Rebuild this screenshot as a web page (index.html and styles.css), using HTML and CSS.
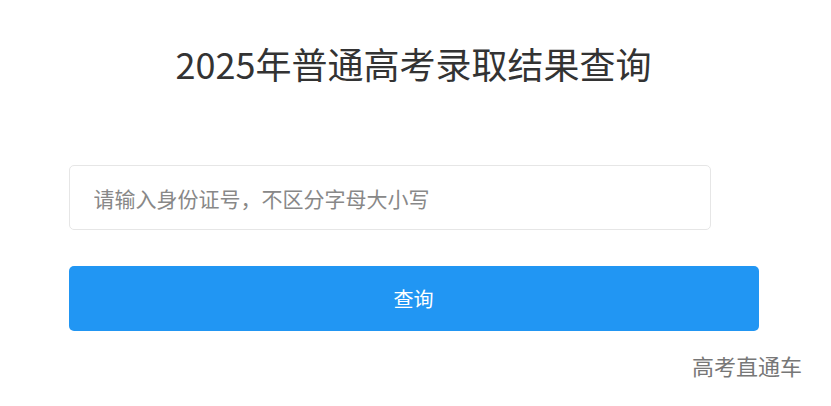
FILE: index.html
```html
<!DOCTYPE html>
<html lang="zh-CN">
<head>
    <meta charset="UTF-8">
    <meta name="viewport" content="width=device-width, initial-scale=1.0">
    <title>2025年普通高考录取结果查询</title>
    <link rel="stylesheet" href="styles.css">
</head>
<body>
    <div class="container">
        <h1>2025年普通高考录取结果查询</h1>
        <form class="query-form">
            <input type="text" class="id-input" placeholder="请输入身份证号，不区分字母大小写">
            <button type="submit" class="query-button">查询</button>
        </form>
    </div>
    <footer>
        <a href="#" class="footer-link">高考直通车</a>
    </footer>
</body>
</html>
```

FILE: styles.css
```css
body {
    font-family: "Noto Sans CJK SC", "Noto Sans", sans-serif;
    margin: 0;
    padding: 0 4px 0 0;
    background: #fff;
    color: #333;
}
.container {
    width: 690px;
    margin: 0 auto;
}
h1 {
    font-size: 36px;
    font-weight: 400;
    line-height: 54px;
    text-align: center;
    margin: 36px 0 0;
    color: #333;
}
.query-form {
    display: flex;
    flex-direction: column;
    margin-top: 75px;
}
.id-input {
    box-sizing: border-box;
    width: 642px;
    height: 65px;
    padding: 0 24px;
    border: 1px solid #e6e6e6;
    border-radius: 5px;
    font-family: inherit;
    font-size: 21px;
    color: #333;
    outline: none;
}
.id-input::placeholder {
    color: #888;
}
.query-button {
    margin-top: 36px;
    width: 690px;
    height: 65px;
    background: #2196f3;
    color: #fff;
    border: none;
    border-radius: 5px;
    font-family: inherit;
    font-size: 20px;
    cursor: pointer;
}
footer {
    display: flex;
    justify-content: flex-end;
    padding-right: 25px;
    margin-top: 18px;
}
.footer-link {
    font-size: 22px;
    color: #777;
    text-decoration: none;
}
```
